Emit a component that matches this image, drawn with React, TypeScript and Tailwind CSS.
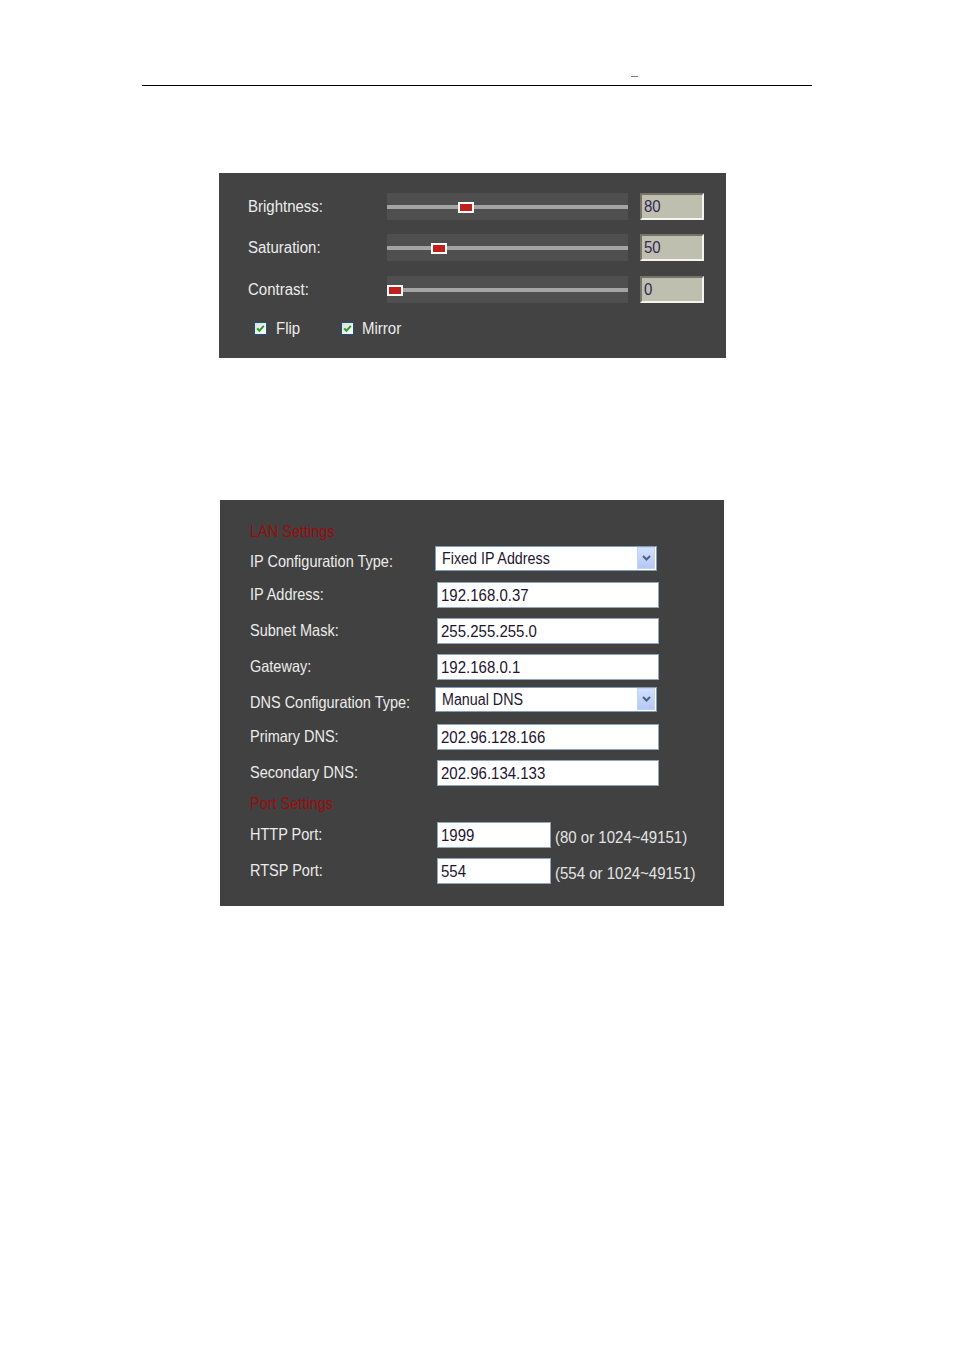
import React from "react";

const T = ({ children, className = "" }: { children: React.ReactNode; className?: string }) => (
  <span className={"inline-block scale-y-[1.15] whitespace-nowrap " + className}>{children}</span>
);

const sliders = [
  { label: "Brightness:", value: 80, mt: "mt-0" },
  { label: "Saturation:", value: 50, mt: "mt-[14px]" },
  { label: "Contrast:", value: 0, mt: "mt-[15px]" },
];

function Checkbox() {
  return (
    <svg width="13" height="13" viewBox="0 0 13 13" className="block shrink-0">
      <defs>
        <linearGradient id="cbg" x1="0" y1="0" x2="1" y2="1">
          <stop offset="0" stopColor="#dcdcd6" />
          <stop offset="1" stopColor="#ffffff" />
        </linearGradient>
      </defs>
      <rect x="0.5" y="0.5" width="12" height="12" fill="url(#cbg)" stroke="#1c5180" />
      <path d="M3.2 6.4 L5.4 8.8 L9.8 3.8" fill="none" stroke="#21a121" strokeWidth="2" />
    </svg>
  );
}

function Slider({ label, value, mt }: { label: string; value: number; mt: string }) {
  const left = Math.round((value / 255) * 225);
  return (
    <div className={"flex items-center h-[27px] " + mt}>
      <div className="w-[139px] text-[15px] text-[#ececec]">
        <T>{label}</T>
      </div>
      <div className="relative w-[241px] h-[27px] bg-[#4f4f4f] flex items-center">
        <div className="h-[4px] w-full bg-[#a4a4a4] mt-[1px]" />
        <div
          className="absolute top-[9px] w-[16px] h-[11px] bg-white p-[2px] box-border"
          style={{ left }}
        >
          <div className="w-full h-full bg-[#c21f1c]" />
        </div>
      </div>
      <div className="ml-[12px] w-[64px] h-[27px] box-border border-2 border-t-[#74746a] border-l-[#74746a] border-b-[#f4f4ee] border-r-[#f4f4ee] bg-[#bfbfb0] pl-[2px] flex items-center text-[15px] text-[#34285a]">
        <T>{value}</T>
      </div>
    </div>
  );
}

function Select({ text }: { text: string }) {
  return (
    <div className="ml-[-2px] w-[222px] h-[25px] box-border border border-[#7f9db9] bg-white flex items-center justify-between">
      <div className="pl-[6px] text-[14.3px] text-[#1e1830]">
        <T>{text}</T>
      </div>
      <div className="mr-[1px] mb-[1px] w-[18px] h-[22px] box-border border border-[#c3d3f8] bg-gradient-to-b from-[#d2e0fd] to-[#b3c8f5] flex items-center justify-center">
        <svg width="9" height="6" viewBox="0 0 9 6">
          <path d="M1 1 L4.5 4.5 L8 1" fill="none" stroke="#4d6185" strokeWidth="2" />
        </svg>
      </div>
    </div>
  );
}

function TextBox({ text, w = "w-[222px]" }: { text: string; w?: string }) {
  return (
    <div className={w + " h-[26px] box-border border border-[#8fa6bd] bg-white pl-[3px] flex items-center text-[15px] text-[#1c1630]"}>
      <T>{text}</T>
    </div>
  );
}

function Label({ children, shift = false }: { children: React.ReactNode; shift?: boolean }) {
  return (
    <div className={"w-[187px] shrink-0 text-[14.5px] text-[#ececec] " + (shift ? "mt-[6px]" : "")}>
      <T>{children}</T>
    </div>
  );
}

export default function App() {
  return (
    <div className="w-[954px] h-[1350px] bg-white font-['Liberation_Sans',Arial,sans-serif] overflow-hidden">
      {/* header */}
      <div className="ml-[142px] pt-[76px] w-[670px]">
        <div className="ml-[489px] w-[7px] h-[1px] bg-[#808080]" />
        <div className="mt-[8px] h-[1px] bg-black" />
      </div>

      {/* panel 1 */}
      <div className="ml-[219px] mt-[87px] w-[507px] h-[185px] bg-[#434343] pl-[29px] pt-[20px] box-border">
        {sliders.map((s) => (
          <Slider key={s.label} {...s} />
        ))}
        <div className="mt-[19px] h-[13px] flex items-center text-[15px] text-[#ececec]">
          <div className="w-[87px] ml-[6px] flex items-center">
            <Checkbox />
            <T className="ml-[9px]">Flip</T>
          </div>
          <div className="flex items-center">
            <Checkbox />
            <T className="ml-[8px]">Mirror</T>
          </div>
        </div>
      </div>

      {/* panel 2 */}
      <div className="ml-[220px] mt-[142px] w-[504px] h-[406px] bg-[#414141] pl-[30px] pt-[24px] box-border">
        <div className="h-[16px] flex items-center text-[14.5px] text-[#9a0c0c]">
          <T>LAN Settings</T>
        </div>
        <div className="mt-[6px] h-[25px] flex items-center">
          <Label shift>IP Configuration Type:</Label>
          <Select text="Fixed IP Address" />
        </div>
        <div className="mt-[11px] h-[26px] flex items-center">
          <Label>IP Address:</Label>
          <TextBox text="192.168.0.37" />
        </div>
        <div className="mt-[10px] h-[26px] flex items-center">
          <Label>Subnet Mask:</Label>
          <TextBox text="255.255.255.0" />
        </div>
        <div className="mt-[10px] h-[26px] flex items-center">
          <Label>Gateway:</Label>
          <TextBox text="192.168.0.1" />
        </div>
        <div className="mt-[7px] h-[25px] flex items-center">
          <Label shift>DNS Configuration Type:</Label>
          <Select text="Manual DNS" />
        </div>
        <div className="mt-[12px] h-[26px] flex items-center">
          <Label>Primary DNS:</Label>
          <TextBox text="202.96.128.166" />
        </div>
        <div className="mt-[10px] h-[26px] flex items-center">
          <Label>Secondary DNS:</Label>
          <TextBox text="202.96.134.133" />
        </div>
        <div className="mt-[10px] h-[16px] flex items-center text-[14.5px] text-[#9a0c0c]">
          <T>Port Settings</T>
        </div>
        <div className="mt-[10px] h-[26px] flex items-center">
          <Label>HTTP Port:</Label>
          <TextBox text="1999" w="w-[114px]" />
          <div className="ml-[4px] mt-[5px] text-[15px] text-[#e4e4e4]">
            <T>(80 or 1024~49151)</T>
          </div>
        </div>
        <div className="mt-[10px] h-[26px] flex items-center">
          <Label>RTSP Port:</Label>
          <TextBox text="554" w="w-[114px]" />
          <div className="ml-[4px] mt-[5px] text-[15px] text-[#e4e4e4]">
            <T>(554 or 1024~49151)</T>
          </div>
        </div>
      </div>
    </div>
  );
}
